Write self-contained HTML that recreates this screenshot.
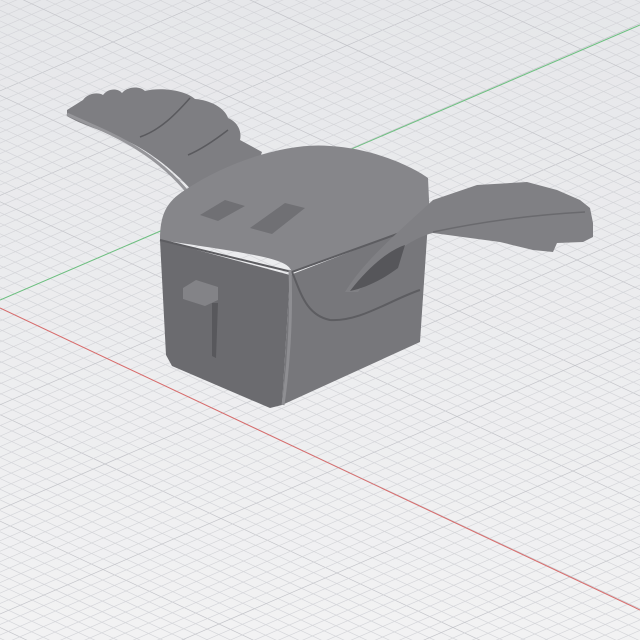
<!DOCTYPE html>
<html><head><style>
html,body{margin:0;padding:0;width:640px;height:640px;overflow:hidden;background:#ececee}
svg{display:block}
</style></head><body>
<svg id="s" width="640" height="640" viewBox="0 0 640 640" xmlns="http://www.w3.org/2000/svg">
<defs>
<linearGradient id="bg" x1="0" y1="0" x2="0" y2="1"><stop offset="0" stop-color="#e6e7ea"/><stop offset="1" stop-color="#f2f2f3"/></linearGradient>
</defs>
<rect width="640" height="640" fill="url(#bg)"/>
<g id="grid" stroke-width="0.7" fill="none"></g>
<line x1="0" y1="308" x2="640" y2="610" stroke="#d96b6b" stroke-width="1"/>
<line x1="0" y1="300" x2="640" y2="25" stroke="#6cc07f" stroke-width="1"/>
<!-- left wing -->
<path d="M67,110 L83,100 C88,93 98,92 103,95 C108,88 118,88 122,93 C128,86 140,86 145,91 C160,87 185,90 195,99 C210,100 225,108 228,118 C238,122 242,132 240,140 L262,152 L250,185 L200,200 C180,175 150,150 120,138 C100,130 80,124 67,116 Z" fill="#7e7e82"/>
<path d="M67,114 C100,130 150,145 190,195" stroke="#96969a" stroke-width="3" fill="none"/>
<path d="M190,98 C175,115 160,130 140,137" stroke="#5a5a5e" stroke-width="1.5" fill="none"/>
<path d="M228,130 C215,140 200,150 188,155" stroke="#5a5a5e" stroke-width="1.5" fill="none"/>
<!-- box right face -->
<path d="M290,275 L428,222 L420,342 L282,405 Z" fill="#77777b"/>
<!-- box front face -->
<path d="M160,240 L290,275 L282,405 L270,408 L172,366 L166,355 Z" fill="#6b6b6f"/>
<!-- lid -->
<path d="M160,240 C160,215 166,202 185,190 C230,160 290,142 330,146 C370,148 410,165 428,178 L430,222 L292,272 C288,260 270,256 160,240Z" fill="#86868a"/>
<path d="M160,240 L292,272 L430,222" stroke="#5d5d61" stroke-width="2" fill="none"/>
<path d="M292,272 C300,290 305,315 330,320 C360,322 390,300 420,290" stroke="#5d5d61" stroke-width="2" fill="none"/>
<path d="M200,215 L225,200 L245,206 L218,221Z" fill="#707074"/>
<path d="M250,228 L285,203 L305,208 L272,234Z" fill="#707074"/>
<path d="M290,270 C292,320 288,370 283,405" stroke="#8e8e92" stroke-width="3" fill="none"/>
<!-- latch -->
<path d="M183,288 L196,280 L218,287 L218,300 L205,306 L183,299Z" fill="#838387"/>
<path d="M212,303 L218,303 L216,358 L212,356Z" fill="#58585c"/>
<!-- right wing -->
<path d="M345,292 C365,260 395,235 433,200 L477,185 L527,182 L557,190 L580,200 L590,208 L593,223 L593,237 L583,242 L557,243 L553,252 L533,250 L500,242 L433,233 C410,238 380,262 358,292Z" fill="#808084"/>
<path d="M433,232 C480,222 530,215 585,212" stroke="#6a6a6e" stroke-width="1.5" fill="none"/>
<path d="M350,291 C370,265 390,250 405,245 L398,268 C382,280 365,288 350,291Z" fill="#56565a"/>
</svg>
<script>
var g=document.getElementById('grid'),s='';
var O=[-9,304],a=[11.6,5.45],b=[11.8,-5.1];
function P(u,v){return [O[0]+u*a[0]+v*b[0],O[1]+u*a[1]+v*b[1]];}
for(var i=-80;i<=80;i++){
 var c=(i%10==0)?'#c4c5ca':'#d5d6da';
 var p=P(i,-80),q=P(i,80);
 s+='<line x1="'+p[0]+'" y1="'+p[1]+'" x2="'+q[0]+'" y2="'+q[1]+'" stroke="'+c+'"/>';
 p=P(-80,i);q=P(80,i);
 s+='<line x1="'+p[0]+'" y1="'+p[1]+'" x2="'+q[0]+'" y2="'+q[1]+'" stroke="'+c+'"/>';
}
g.innerHTML=s;
</script>
</body></html>
